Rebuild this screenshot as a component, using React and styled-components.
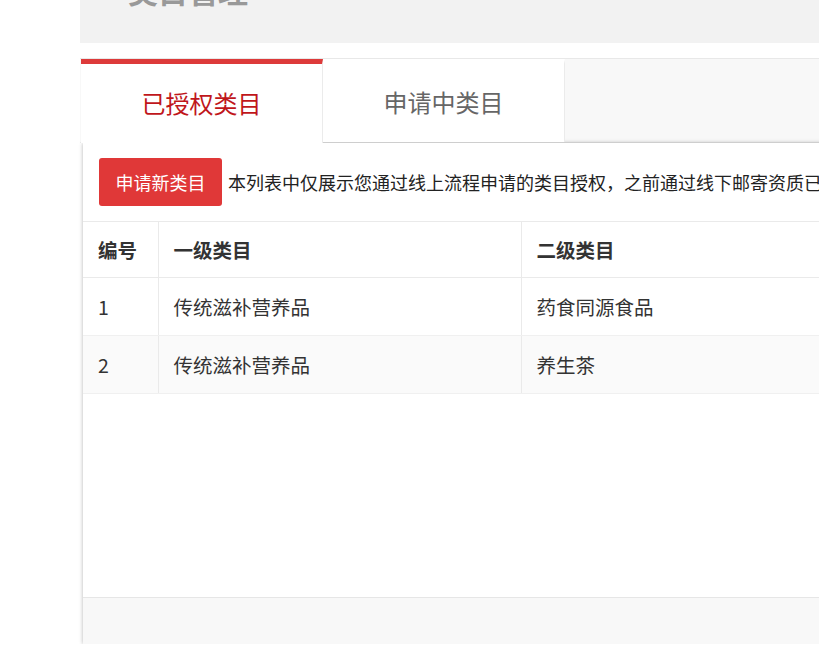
import React from "react";
import styled, { createGlobalStyle } from "styled-components";

const GlobalStyle = createGlobalStyle`
  html, body {
    margin: 0;
    padding: 0;
    background: #fff;
    overflow: hidden;
  }
  body {
    font-family: "Noto Sans CJK SC", "Noto Sans", sans-serif;
    color: #333;
  }
`;

const Page = styled.div`
  padding-left: 80px;
  width: 1200px;
`;

const Header = styled.div`
  height: 43px;
  background-color: #f2f2f2;
  overflow: hidden;
`;

const PageTitle = styled.h1`
  margin: -30px 0 0 48px;
  font-size: 30px;
  line-height: 40px;
  font-weight: bold;
  color: #999;
`;

const Panel = styled.div`
  margin-top: 15px;
  border-top: 1px solid #e8e8e8;
`;

const TabBar = styled.div`
  display: flex;
  height: 83px;
  padding-left: 1px;
  background-color: #f8f8f8;
  border-bottom: 1px solid #ebebeb;
`;

const Tab = styled.div`
  width: 242px;
  display: flex;
  align-items: center;
  justify-content: center;
  box-sizing: border-box;
  background-color: #fff;
  font-size: 24px;
  color: ${(p) => (p.active ? "#c0161b" : "#666")};
  border-top: 5px solid ${(p) => (p.active ? "#dd3a3a" : "transparent")};
  border-right: 1px solid #ebebeb;
  margin-bottom: ${(p) => (p.active ? "-1px" : "0")};
  padding-bottom: 3px;
`;

const Content = styled.div`
  display: flex;
  flex-direction: column;
  height: 501px;
  margin-left: 3px;
  background: #fff;
  box-shadow: 0 0 4px rgba(0, 0, 0, 0.3);
`;

const Toolbar = styled.div`
  display: flex;
  align-items: center;
  gap: 6px;
  height: 78px;
  padding-left: 16px;
  border-bottom: 1px solid #eaeaea;
  white-space: nowrap;
`;

const Button = styled.button`
  height: 48px;
  width: 123px;
  padding: 0;
  border: none;
  border-radius: 3px;
  background-color: #e03838;
  color: #fff;
  font-family: inherit;
  font-size: 18px;
`;

const Note = styled.span`
  font-size: 18px;
  color: #222;
`;

const Table = styled.table`
  border-collapse: collapse;
  width: 100%;
  font-size: 19.5px;
`;

const Th = styled.th`
  height: 55px;
  text-align: left;
  padding: 0 15px;
  font-weight: bold;
  color: #333;
  border-bottom: 1px solid #eaeaea;
  border-left: 1px solid #eaeaea;
  &:first-child {
    border-left: none;
  }
`;

const Row = styled.tr`
  background-color: ${(p) => (p.striped ? "#fafafa" : "#fff")};
`;

const Td = styled.td`
  height: 57px;
  padding: 0 15px;
  color: #333;
  border-bottom: 1px solid #f0f0f0;
  border-left: 1px solid #eaeaea;
  &:first-child {
    border-left: none;
  }
`;

const Spacer = styled.div`
  flex: 1;
`;

const Footer = styled.div`
  height: 46px;
  background-color: #f8f8f8;
  border-top: 1px solid #e6e6e6;
`;

const rows = [
  { id: 1, first: "传统滋补营养品", second: "药食同源食品" },
  { id: 2, first: "传统滋补营养品", second: "养生茶" },
];

export default function App() {
  return (
    <Page>
      <GlobalStyle />
      <Header>
        <PageTitle>类目管理</PageTitle>
      </Header>
      <Panel>
        <TabBar>
          <Tab active>已授权类目</Tab>
          <Tab>申请中类目</Tab>
        </TabBar>
        <Content>
          <Toolbar>
            <Button>申请新类目</Button>
            <Note>
              本列表中仅展示您通过线上流程申请的类目授权，之前通过线下邮寄资质已获得的类目授权请在经营信息中查看
            </Note>
          </Toolbar>
          <Table>
            <colgroup>
              <col style={{ width: 75 }} />
              <col style={{ width: 363 }} />
              <col />
            </colgroup>
            <thead>
              <tr>
                <Th>编号</Th>
                <Th>一级类目</Th>
                <Th>二级类目</Th>
              </tr>
            </thead>
            <tbody>
              {rows.map((r, i) => (
                <Row key={r.id} striped={i % 2 === 1}>
                  <Td>{r.id}</Td>
                  <Td>{r.first}</Td>
                  <Td>{r.second}</Td>
                </Row>
              ))}
            </tbody>
          </Table>
          <Spacer />
          <Footer />
        </Content>
      </Panel>
    </Page>
  );
}
